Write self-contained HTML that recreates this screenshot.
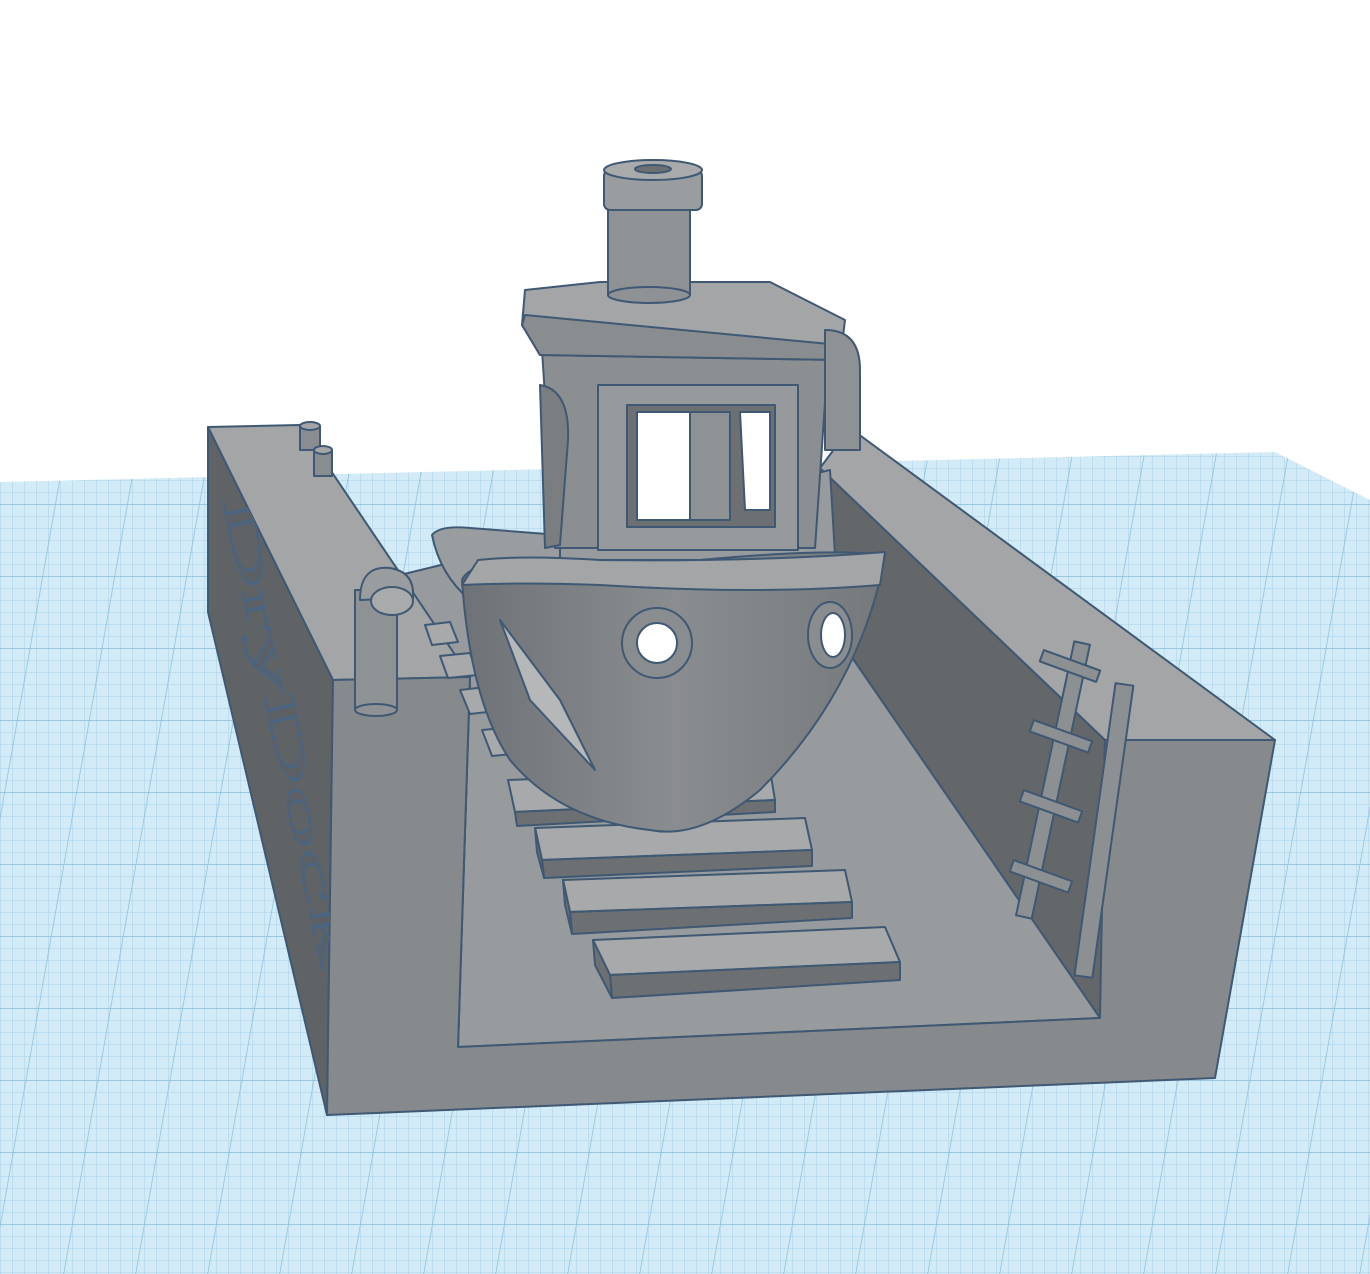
<!DOCTYPE html>
<html><head><meta charset="utf-8"><style>
html,body{margin:0;padding:0;background:#fff;width:1370px;height:1274px;overflow:hidden}
svg{display:block}
</style></head><body>
<svg width="1370" height="1274" viewBox="0 0 1370 1274" xmlns="http://www.w3.org/2000/svg">
<defs>
<pattern id="fine" width="12" height="12" patternUnits="userSpaceOnUse">
<rect width="12" height="12" fill="#d3ebf7"/>
<path d="M0 0H12M0 0V12" stroke="#a6d2e9" stroke-width="1"/>
</pattern>
<pattern id="major" width="72" height="72" patternUnits="userSpaceOnUse" patternTransform="skewX(-10)">
<path d="M0 0H72M0 0V72" stroke="#86bcd9" stroke-width="1.4" fill="none"/>
</pattern>
<linearGradient id="hull" x1="0" y1="0" x2="1" y2="0">
<stop offset="0" stop-color="#6e7276"/><stop offset="0.5" stop-color="#8a8d90"/><stop offset="1" stop-color="#75797c"/>
</linearGradient>
<clipPath id="lf"><polygon points="208,427 333,680 327,1115 208,612"/></clipPath>
</defs>
<polygon points="0,482 1275,452 1370,500 1370,1274 0,1274" fill="url(#fine)"/>
<polygon points="0,482 1275,452 1370,500 1370,1274 0,1274" fill="url(#major)"/>
<g stroke="#3f5873" stroke-width="2" stroke-linejoin="round">
<polygon points="820,468 1105,740 1100,1018 840,640" fill="#63676a"/>
<polygon points="820,468 850,428 1275,740 1105,740" fill="#a3a5a7"/>
<polygon points="400,575 830,470 840,640 1100,1018 458,1047 470,677" fill="#989b9e"/>
<polygon points="400,575 470,677 458,1047 455,1047" fill="#9a9da0"/>
<polygon points="208,427 333,680 327,1115 208,612" fill="#5f6366"/>
<polygon points="208,427 300,425 470,677 333,680" fill="#a3a5a7"/>
<polygon points="333,680 470,677 458,1047 1100,1018 1105,740 1275,740 1215,1078 327,1115" fill="#878a8d"/>
<g clip-path="url(#lf)">
<text x="0" y="0" transform="translate(222,500) rotate(78) scale(1,0.8)" font-family="Liberation Serif,serif" font-size="54" fill="#5c6064" stroke="#4a6482" stroke-width="1.5" textLength="480" lengthAdjust="spacingAndGlyphs">DryDock</text>
</g>
<rect x="300" y="426" width="20" height="24" fill="#8a8d90"/>
<ellipse cx="310" cy="426" rx="10" ry="4" fill="#a3a5a7"/>
<rect x="314" y="450" width="18" height="26" fill="#8a8d90"/>
<ellipse cx="323" cy="450" rx="9" ry="4" fill="#a3a5a7"/>
<rect x="355" y="590" width="42" height="120" fill="#8f9295"/>
<ellipse cx="376" cy="710" rx="21" ry="6" fill="#8f9295"/>
<path d="M360 600 Q360 565 390 568 Q415 572 413 598 Z" fill="#9a9da0"/>
<ellipse cx="392" cy="601" rx="21" ry="14" fill="#a8aaac"/>
<g fill="#a7a9ab">
<polygon points="425,625 450,622 458,642 432,645"/>
<polygon points="440,656 470,653 478,675 448,678"/>
<polygon points="460,690 495,686 505,710 470,714"/>
<polygon points="482,730 525,726 535,752 492,756"/>
<polygon points="508,780 770,770 775,800 515,812"/>
<polygon points="535,828 805,818 812,850 542,860"/>
<polygon points="563,880 845,870 852,902 570,912"/>
<polygon points="593,940 885,927 900,962 610,975"/>
</g>
<g fill="#6c7073">
<polygon points="515,812 775,800 775,812 517,826"/>
<polygon points="542,860 812,850 812,866 544,878"/>
<polygon points="570,912 852,902 852,918 572,934"/>
<polygon points="610,975 900,962 900,980 612,998"/>
<polygon points="593,940 610,975 612,998 595,965"/>
<polygon points="563,880 570,912 572,934 565,905"/>
<polygon points="535,828 542,860 544,878 537,852"/>
</g>
<g fill="#8d9093">
<rect x="1045" y="640" width="16" height="280" transform="rotate(12 1053 780)"/>
<rect x="1095" y="683" width="18" height="295" transform="rotate(8 1104 830)"/>
<rect x="1040" y="660" width="60" height="12" transform="rotate(20 1070 666)"/>
<rect x="1030" y="730" width="62" height="12" transform="rotate(20 1060 736)"/>
<rect x="1020" y="800" width="62" height="12" transform="rotate(20 1050 806)"/>
<rect x="1010" y="870" width="62" height="12" transform="rotate(20 1040 876)"/>
</g>
<path d="M432 535 Q440 525 470 528 L560 535 L560 580 L470 600 Q440 575 432 535 Z" fill="#9a9da0"/>
<polygon points="540,320 830,330 815,548 555,548" fill="#8c8f92"/>
<polygon points="525,290 600,282 770,282 845,320 840,360 540,355 522,325" fill="#a3a5a7"/>
<polygon points="522,325 540,355 840,360 840,345 525,315" fill="#8a8d90"/>
<rect x="598" y="385" width="200" height="165" fill="#979a9d"/>
<rect x="627" y="405" width="148" height="122" fill="#6c7073"/>
<path d="M637 412 L690 412 L690 520 L637 520 Z" fill="#fff"/>
<rect x="690" y="412" width="40" height="108" fill="#8f9295"/>
<path d="M740 412 L770 412 L770 510 L745 510 Z" fill="#fff"/>
<path d="M540 385 Q570 390 568 440 L560 545 L545 548 Z" fill="#7a7e81"/>
<path d="M825 330 Q860 330 860 370 L860 450 L825 450 Z" fill="#8f9295"/>
<rect x="608" y="200" width="82" height="95" fill="#8f9295"/>
<ellipse cx="649" cy="295" rx="41" ry="8" fill="#8f9295"/>
<rect x="604" y="170" width="98" height="40" rx="6" fill="#9a9da0"/>
<ellipse cx="653" cy="170" rx="49" ry="10" fill="#a8aaac"/>
<ellipse cx="653" cy="169" rx="18" ry="4" fill="#6c7073"/>
<path d="M462 580 Q470 560 540 560 L700 560 Q830 548 885 555 L880 580 Q850 700 760 790 Q700 840 650 830 Q560 820 510 760 Q470 700 462 580 Z" fill="url(#hull)"/>
<path d="M478 560 Q520 555 600 560 Q760 562 885 552 L880 585 Q760 595 600 585 Q520 582 462 585 Z" fill="#a3a5a7"/>
<path d="M500 620 L560 700 L595 770 L530 700 Z" fill="#b5b7b9"/>
<circle cx="657" cy="643" r="35" fill="#8a8d90"/>
<circle cx="657" cy="643" r="20" fill="#fff"/>
<ellipse cx="830" cy="635" rx="22" ry="33" fill="#8a8d90"/>
<ellipse cx="833" cy="635" rx="12" ry="22" fill="#fff"/>
</g>
</svg>
</body></html>
